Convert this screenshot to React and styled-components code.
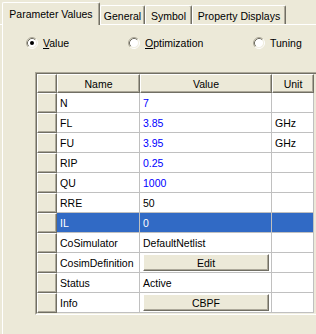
import React from "react";
import styled, { createGlobalStyle } from "styled-components";

const GlobalStyle = createGlobalStyle`
  html, body {
    margin: 0;
    padding: 0;
    background: #ece9d8;
  }
  body {
    font-family: Tahoma, "Liberation Sans", Arial, sans-serif;
    font-size: 10.5px;
    color: #000;
  }
`;

const Window = styled.div`
  width: 316px;
  height: 334px;
  overflow: hidden;
  background: #ece9d8;
`;

const TabStrip = styled.div`
  display: flex;
  align-items: flex-end;
  height: 25px;
  box-sizing: border-box;
  padding-left: 2px;
  border-bottom: 1px solid #fff;
`;

const Tab = styled.div`
  position: relative;
  box-sizing: border-box;
  width: ${(p) => p.$width}px;
  height: ${(p) => (p.$active ? 23 : 19)}px;
  margin-bottom: ${(p) => (p.$active ? -1 : 0)}px;
  display: flex;
  align-items: center;
  justify-content: center;
  padding-top: ${(p) => (p.$active ? 0 : 2)}px;
  background: #ece9d8;
  border-top: 1px solid #fff;
  border-left: 1px solid #fff;
  border-right: 1px solid #716f64;
  box-shadow: inset -1px 0 #aca899;
  border-radius: 2px 2px 0 0;
  z-index: ${(p) => (p.$active ? 1 : 0)};
  white-space: nowrap;
`;

const Panel = styled.div`
  margin-left: 2px;
  border-left: 1px solid #fff;
  height: 309px;
`;

const RadioRow = styled.div`
  display: flex;
  height: 13px;
  padding: 11px 0 0 23px;
`;

const RadioLabel = styled.label`
  display: flex;
  align-items: center;
  gap: 5px;
  width: ${(p) => p.$width}px;
  white-space: nowrap;
`;

const Key = styled.span`
  text-decoration: underline;
`;

const Frame = styled.div`
  margin: 23px 0 0 32px;
  width: 281px;
  border-top: 1px solid #aca899;
  border-left: 1px solid #aca899;
  border-bottom: 1px solid #fff;
`;

const Grid = styled.div`
  display: grid;
  grid-template-columns: 20px 83px 132px 42px;
  grid-template-rows: 19px;
  grid-auto-rows: 20px;
  border-top: 1px solid #716f64;
  border-left: 1px solid #716f64;
  border-bottom: 1px solid #f1efe2;
`;

const HeadCell = styled.div`
  box-sizing: border-box;
  display: flex;
  align-items: center;
  justify-content: center;
  background: #ece9d8;
  border-top: 1px solid #fff;
  border-left: 1px solid #fff;
  border-right: 1px solid #716f64;
  border-bottom: 1px solid #716f64;
  box-shadow: inset -1px -1px #aca899;
`;

const Cell = styled.div`
  box-sizing: border-box;
  display: flex;
  align-items: center;
  padding-left: 3px;
  background: ${(p) => (p.$selected ? "#316ac5" : "#fff")};
  color: ${(p) => (p.$selected ? "#fff" : p.$blue ? "#0000ff" : "#000")};
  border-right: 1px solid #c0c0c0;
  border-bottom: 1px solid #c0c0c0;
  white-space: nowrap;
  overflow: hidden;
`;

const ButtonCell = styled.div`
  box-sizing: border-box;
  display: flex;
  padding: 1px 2px 1px 3px;
  background: #fff;
  border-right: 1px solid #c0c0c0;
  border-bottom: 1px solid #c0c0c0;
`;

const CellButton = styled.div`
  flex: 1;
  box-sizing: border-box;
  display: flex;
  align-items: center;
  justify-content: center;
  background: #ece9d8;
  border-top: 1px solid #fff;
  border-left: 1px solid #fff;
  border-right: 1px solid #716f64;
  border-bottom: 1px solid #716f64;
  box-shadow: inset -1px -1px #aca899;
`;

const RadioIcon = ({ checked }) => (
  <svg width="12" height="12" viewBox="0 0 12 12">
    <circle cx="6" cy="6" r="4.5" fill="#fff" />
    <path d="M2.11 9.89 A5.5 5.5 0 0 1 9.89 2.11" fill="none" stroke="#aca899" />
    <path d="M9.89 2.11 A5.5 5.5 0 0 1 2.11 9.89" fill="none" stroke="#fff" />
    <path d="M2.82 9.18 A4.5 4.5 0 0 1 9.18 2.82" fill="none" stroke="#716f64" />
    <path d="M9.18 2.82 A4.5 4.5 0 0 1 2.82 9.18" fill="none" stroke="#f1efe2" />
    {checked && <circle cx="6" cy="6" r="2" fill="#000" />}
  </svg>
);

const tabs = [
  { label: "Parameter Values", width: 98, active: true },
  { label: "General", width: 45 },
  { label: "Symbol", width: 47 },
  { label: "Property Displays", width: 94 },
];

const rows = [
  { name: "N", value: "7", blue: true },
  { name: "FL", value: "3.85", blue: true, unit: "GHz" },
  { name: "FU", value: "3.95", blue: true, unit: "GHz" },
  { name: "RIP", value: "0.25", blue: true },
  { name: "QU", value: "1000", blue: true },
  { name: "RRE", value: "50" },
  { name: "IL", value: "0", selected: true },
  { name: "CoSimulator", value: "DefaultNetlist" },
  { name: "CosimDefinition", button: "Edit" },
  { name: "Status", value: "Active" },
  { name: "Info", button: "CBPF" },
];

const App = () => (
  <Window>
    <GlobalStyle />
    <TabStrip>
      {tabs.map((t) => (
        <Tab key={t.label} $width={t.width} $active={t.active}>
          {t.label}
        </Tab>
      ))}
    </TabStrip>
    <Panel>
      <RadioRow>
        <RadioLabel $width={102}>
          <RadioIcon checked />
          <span>
            <Key>V</Key>alue
          </span>
        </RadioLabel>
        <RadioLabel $width={125}>
          <RadioIcon />
          <span>
            <Key>O</Key>ptimization
          </span>
        </RadioLabel>
        <RadioLabel $width={60}>
          <RadioIcon />
          <span>Tuning</span>
        </RadioLabel>
      </RadioRow>
      <Frame>
        <Grid>
          <HeadCell />
          <HeadCell>Name</HeadCell>
          <HeadCell>Value</HeadCell>
          <HeadCell>Unit</HeadCell>
          {rows.map((r) => (
            <React.Fragment key={r.name}>
              <HeadCell />
              <Cell $selected={r.selected}>{r.name}</Cell>
              {r.button ? (
                <ButtonCell>
                  <CellButton>{r.button}</CellButton>
                </ButtonCell>
              ) : (
                <Cell $selected={r.selected} $blue={r.blue}>
                  {r.value}
                </Cell>
              )}
              <Cell $selected={r.selected}>{r.unit}</Cell>
            </React.Fragment>
          ))}
        </Grid>
      </Frame>
    </Panel>
  </Window>
);

export default App;
